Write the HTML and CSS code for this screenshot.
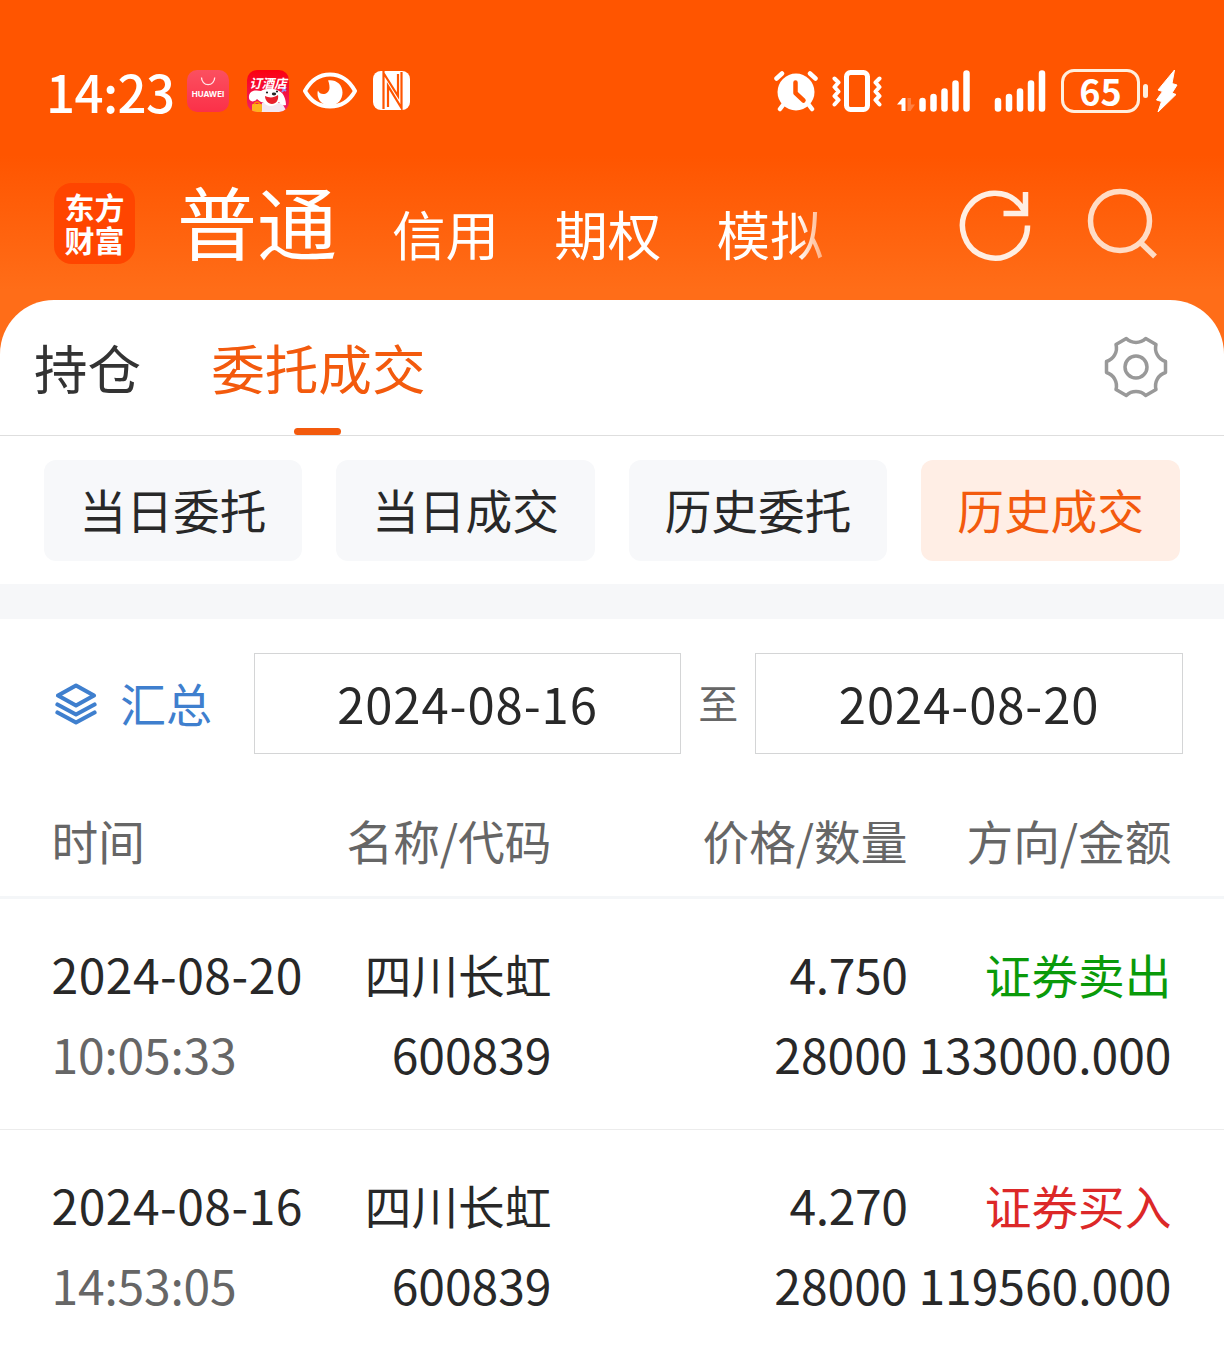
FILE: index.html
```html
<!DOCTYPE html>
<html lang="zh-CN">
<head>
  <meta charset="UTF-8">
  <meta name="viewport" content="width=device-width, initial-scale=1.0">
  <title>历史成交</title>
  <link rel="stylesheet" href="styles.css">
</head>
<body>
  <header class="top">
    <div class="status">
      <span class="clock">14:23</span>
      <span class="app huawei">
        <svg width="42" height="42" viewBox="0 0 42 42"><path d="M14.500 7.500a6.600 7.200 0 0 0 13.200 0" fill="none" stroke="#fff" stroke-opacity=".85" stroke-width="1.300"/></svg>
        <b>HUAWEI</b>
      </span>
      <span class="app jd">
        <svg width="42" height="42" viewBox="0 0 42 42">
          <path d="M35 18l4 3M39 17l-4 5" stroke="#9a8cf0" stroke-width="2"/>
          <path d="M14 42l1-9h20l5 9z" fill="#f3e8f2"/>
          <path d="M2 26c1-6 7-6 12-5 4-3 14-3 18 0 5 2 7 9 7 14-3 1-6-1-7-3-3 4-11 6-15 1-3-1-5-2-7-4-3 4-9 3-8-3z" fill="#fff"/>
          <path d="M18 26c4 2 9 2 13-1 1 5-2 9-6 9s-7-4-7-8z" fill="#e8202c"/>
          <ellipse cx="27" cy="24" rx="2.200" ry="1.400" fill="#222"/>
          <circle cx="20" cy="22.500" r="1.100" fill="#222"/><circle cx="30" cy="21.500" r="1.100" fill="#222"/>
          <rect x="5" y="34" width="10" height="8" rx="1" fill="#ffb01f"/>
          <path d="M7 34q3-4 6 0" fill="none" stroke="#ff8a00" stroke-width="1.500"/>
        </svg>
        <b>订酒店</b>
      </span>
      <svg class="eye" width="54" height="38" viewBox="0 0 54 38">
        <path d="M2 19C8 8 17 2.500 27 2.500S46 8 52 19C46 30 37 34.500 27 34.500S8 30 2 19z" fill="none" stroke="#fff" stroke-width="4" stroke-linejoin="round"/>
        <path d="M25 8.500c8-1 14.500 4 14.500 12 0 7-5 13-12.500 13s-12.500-5.500-12.500-12c0-1 0-2 .5-3 2 5.500 11 4.500 11.500-2.500 0-3-.5-5.500-1.500-7.500z" fill="#fff"/>
      </svg>
      <svg class="nfc" width="38" height="40" viewBox="0 0 38 40">
        <rect width="37" height="39" rx="8" fill="#fff"/>
        <path d="M10.500 0V38M10.500 2L25 25V3" fill="none" stroke="#ff5500" stroke-width="2.200"/>
        <path d="M15 36V15L28.500 37V1" fill="none" stroke="#ff5500" stroke-width="2.200"/>
      </svg>
      <svg class="alarm" width="44" height="42" viewBox="0 0 44 42">
        <circle cx="22" cy="22" r="18.500" fill="#fff"/>
        <path d="M2.500 8.500L8 3.500M41.500 8.500L36 3.500M9 35l-3 4M35 35l3 4" stroke="#fff" stroke-width="4.500" stroke-linecap="round"/>
        <path d="M21.500 12.500V23l8 7.500" fill="none" stroke="#ff5500" stroke-width="4.500" stroke-linecap="round" stroke-linejoin="round"/>
      </svg>
      <svg class="vibrate" width="50" height="42" viewBox="0 0 50 42">
        <rect x="14.500" y="2.500" width="21" height="37" rx="4" fill="none" stroke="#fff" stroke-width="5"/>
        <path d="M2.500 8.500l4 4-4 4.500 4 4.500-4 4.500 4 4-4 4.500M47.500 8.500l-4 4 4 4.500-4 4.500 4 4.500-4 4 4 4.500" fill="none" stroke="#fff" stroke-width="4" stroke-linecap="round" stroke-linejoin="round"/>
      </svg>
      <svg class="signal" width="74" height="42" viewBox="0 0 74 42">
        <path d="M0 34.500L5.500 28H8.500V41H4.500V34.500z" fill="#fff"/>
        <path d="M10.500 28H14V34.500H18L13.500 41H10.500z" fill="#fff" fill-opacity=".25"/>
        <path d="M25.500 31v7.500M36.500 27v11.500M47.500 21.500v17M58.500 13.500v25M69.500 3.500v35" stroke="#fff" stroke-width="6.500" stroke-linecap="round"/>
      </svg>
      <svg class="signal2" width="52" height="42" viewBox="0 0 52 42">
        <path d="M4 31v7.500M15 27v11.500M26 21.500v17M37 13.500v25M48 3.500v35" stroke="#fff" stroke-width="6.500" stroke-linecap="round"/>
      </svg>
      <span class="battery">65</span>
      <svg class="charge" width="24" height="44" viewBox="0 0 24 44">
        <path d="M19.500 1L3 21l4.500 1.500L1.500 31l5 1.500L3 43l18-17.500-4-1.500 5-8-5-1.500z" fill="#fff" stroke="#fff" stroke-linejoin="round"/>
      </svg>
    </div>
    <nav class="accounts">
      <span class="logo">东方<br>财富</span>
      <span class="account current">普通</span>
      <span class="account">信用</span>
      <span class="account">期权</span>
      <span class="account fade">模拟</span>
      <svg class="refresh" width="74" height="74" viewBox="0 0 74 74">
        <path d="M69.500 37.500A32.500 32.500 0 1 1 62.500 17.500L67 24" fill="none" stroke="#ffeee2" stroke-width="5.500"/>
        <path d="M67.500 4v21.500H45.500" fill="none" stroke="#ffeee2" stroke-width="5.500"/>
      </svg>
      <svg class="search" width="74" height="74" viewBox="0 0 74 74">
        <circle cx="33" cy="34" r="29.500" fill="none" stroke="#ffdcc5" stroke-width="5.500"/>
        <path d="M53 55l15 14.500" stroke="#ffdcc5" stroke-width="5.500"/>
      </svg>
    </nav>
  </header>

  <main class="panel">
    <div class="tabs">
      <span class="tab">持仓</span>
      <span class="tab active">委托成交</span>
      <svg class="gear" width="64" height="64" viewBox="0 0 64 64" fill="none" stroke="#999" stroke-width="3.500" stroke-linejoin="round">
        <path d="M22.300 3.500A14 14 0 0 0 41.700 3.500L52 9.500A14 14 0 0 0 61.500 26.500V37.500A14 14 0 0 0 52 54.500L41.700 60.500A14 14 0 0 0 22.300 60.500L12 54.500A14 14 0 0 0 2.500 37.500V26.500A14 14 0 0 0 12 9.500Z"/>
        <circle cx="32" cy="32" r="11"/>
      </svg>
    </div>

    <div class="chips">
      <span class="chip">当日委托</span>
      <span class="chip">当日成交</span>
      <span class="chip">历史委托</span>
      <span class="chip selected">历史成交</span>
    </div>

    <div class="filter">
      <svg class="layers" width="42" height="42" viewBox="0 0 42 42" fill="none" stroke="#3f7fce" stroke-width="4.200" stroke-linejoin="round" stroke-linecap="round">
        <path d="M21 2.500L39 12.500 21 22.500 3 12.500z"/>
        <path d="M2.500 21.500L21 31.500 39.500 21.500M2.500 29.500L21 39.500 39.500 29.500"/>
      </svg>
      <span class="summary">汇总</span>
      <span class="date">2024-08-16</span>
      <span class="to">至</span>
      <span class="date">2024-08-20</span>
    </div>

    <div class="row head">
      <span>时间</span>
      <span>名称/代码</span>
      <span>价格/数量</span>
      <span>方向/金额</span>
    </div>

    <div class="row">
      <span class="num day">2024-08-20</span>
      <span>四川长虹</span>
      <span class="num price">4.750</span>
      <span class="sell">证券卖出</span>
      <span class="num time">10:05:33</span>
      <span class="num">600839</span>
      <span class="num">28000</span>
      <span class="num">133000.000</span>
    </div>

    <div class="row">
      <span class="num day">2024-08-16</span>
      <span>四川长虹</span>
      <span class="num price">4.270</span>
      <span class="buy">证券买入</span>
      <span class="num time">14:53:05</span>
      <span class="num">600839</span>
      <span class="num">28000</span>
      <span class="num">119560.000</span>
    </div>
  </main>
</body>
</html>
```

FILE: styles.css
```css
* {
  box-sizing: border-box;
}
body {
  margin: 0;
  width: 1224px;
  height: 1354px;
  overflow: hidden;
  font-family: "Noto Sans CJK SC", sans-serif;
  font-size: 46.7px;
  color: #282828;
  background: #fff;
}
svg {
  display: block;
  flex: none;
}
.top {
  height: 360px;
  background: linear-gradient(#ff5500 0, #ff5500 155px, #ff6d18 290px, #ff6d18 100%);
}

/* status bar */
.status {
  display: flex;
  align-items: center;
  height: 150px;
  padding: 32px 45px 0 46px;
  color: #fff;
}
.clock {
  width: 141px;
  font-size: 51px;
  line-height: 52px;
  font-weight: 500;
  letter-spacing: -0.6px;
  margin-top: -1px;
}
.app {
  position: relative;
  width: 42px;
  height: 42px;
  border-radius: 10px;
  overflow: hidden;
}
.app b {
  position: absolute;
  left: 0;
  width: 42px;
  text-align: center;
  white-space: nowrap;
}
.huawei {
  background: linear-gradient(#fb5060, #fb3048);
}
.huawei b {
  top: 18px;
  font: bold 8px/12px Inter, sans-serif;
}
.jd {
  margin-left: 18px;
  background: linear-gradient(#fb0010, #f0206a);
}
.jd b {
  top: 5px;
  font-size: 12.5px;
  line-height: 15px;
  font-style: italic;
}
.eye {
  margin-left: 14px;
}
.nfc {
  margin-left: 16px;
}
.alarm {
  margin-left: auto;
}
.vibrate {
  margin-left: 14px;
}
.signal {
  margin-left: 15px;
}
.signal2 {
  margin-left: 23px;
}
.battery {
  position: relative;
  width: 79px;
  height: 44px;
  margin-left: 15px;
  border: 3px solid #ffeedd;
  border-radius: 13px;
  text-align: center;
  font-size: 36px;
  line-height: 36px;
  font-weight: 700;
}
.battery::after {
  content: "";
  position: absolute;
  right: -11px;
  top: 12px;
  width: 5px;
  height: 14px;
  border-radius: 3px;
  background: #ffeedd;
}
.charge {
  margin-left: 15px;
}

/* account switcher */
.accounts {
  display: flex;
  height: 150px;
  padding: 33px 63px 0 54px;
  color: #fff;
}
.logo {
  width: 81px;
  height: 81px;
  padding-top: 7px;
  border-radius: 18px;
  background: #ff4500;
  text-align: center;
  font-size: 30px;
  line-height: 33px;
  font-weight: 700;
}
.account {
  margin: 17px 0 0 55px;
  font-size: 53.6px;
  line-height: 66px;
}
.account.current {
  margin: -10px 0 0 42px;
  font-size: 80px;
  line-height: 92px;
}
.fade {
  background: linear-gradient(90deg, #fff 75%, #ff9a60 105%);
  -webkit-background-clip: text;
  background-clip: text;
  color: transparent;
}
.refresh {
  margin: 5px 0 0 auto;
}
.search {
  margin: 4px 0 0 55px;
}

/* white sheet */
.panel {
  position: relative;
  margin-top: -60px;
  height: 1054px;
  border-radius: 54px 54px 0 0;
  background: #fff;
}
.tabs {
  display: flex;
  height: 136px;
  padding: 0 56px 0 34px;
  border-bottom: 1px solid #dedede;
}
.tab {
  position: relative;
  font-size: 53.6px;
  line-height: 134px;
  margin-right: 70px;
  color: #333;
}
.tab.active {
  color: #f35a0d;
}
.tab.active::after {
  content: "";
  position: absolute;
  left: 50%;
  bottom: 0;
  width: 47px;
  height: 7px;
  margin-left: -24px;
  border-radius: 4px;
  background: #f35a0d;
}
.gear {
  margin: 35px 0 0 auto;
}
.chips {
  display: grid;
  grid-template-columns: repeat(4, 1fr);
  gap: 33.8px;
  height: 183px;
  padding: 24px 44px 23px 43.6px;
  border-bottom: 35px solid #f6f7f9;
}
.chip {
  border-radius: 12px;
  background: #f7f8fa;
  text-align: center;
  line-height: 98px;
}
.chip.selected {
  background: #ffeee5;
  color: #f35a0d;
}
.filter {
  display: flex;
  align-items: center;
  padding: 34px 41px 0 55px;
}
.summary {
  width: 156.6px;
  padding-left: 23px;
  line-height: 60px;
  margin-top: -4px;
  font-size: 46px;
  color: #3f7fce;
}
.date {
  flex: 1;
  height: 101px;
  border: 1px solid #d4d5d6;
  text-align: center;
  font-size: 49px;
  line-height: 98px;
  letter-spacing: 0.9px;
}
.to {
  width: 74px;
  text-align: center;
  font-size: 40px;
  line-height: 60px;
  margin-top: -4px;
  color: #666;
}

/* trade list */
.row {
  display: grid;
  grid-template-columns: 253px 247px 356px 264px;
  grid-auto-rows: 80px;
  height: 231px;
  padding: 35px 51.5px 0;
  border-bottom: 1px solid #ececec;
  line-height: 79px;
  white-space: nowrap;
  text-align: right;
}
.row span {
  justify-self: end;
}
.row span:nth-child(4n + 1) {
  justify-self: start;
}
.row.head {
  height: 145px;
  padding-top: 46px;
  border-bottom: 3px solid #f4f6f8;
  color: #666;
}
.num {
  font-size: 48px;
}
.day {
  letter-spacing: 0.5px;
}
.price {
  letter-spacing: -0.4px;
}
.row .time {
  letter-spacing: -0.2px;
  color: #666;
}
.row .sell {
  color: #0a9a0a;
}
.row .buy {
  color: #dc2828;
}
```
